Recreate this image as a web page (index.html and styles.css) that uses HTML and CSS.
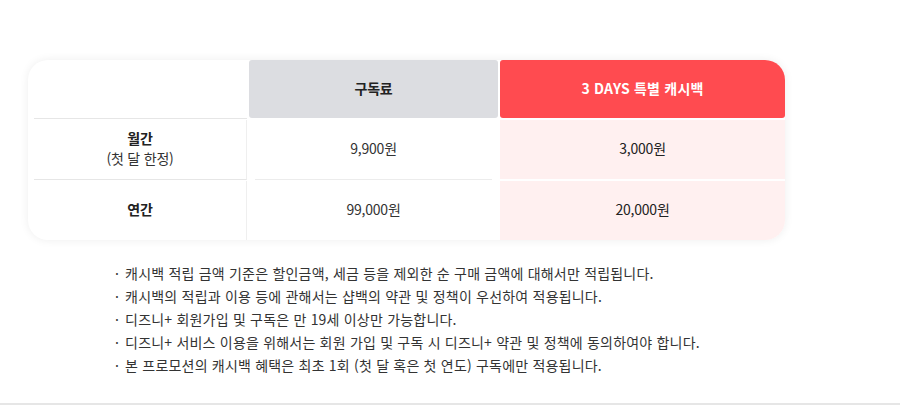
FILE: index.html
```html
<!DOCTYPE html>
<html lang="ko">
<head>
<meta charset="utf-8">
<link rel="stylesheet" href="styles.css">
</head>
<body>
<section class="promo">
  <div class="card">
    <div class="cell label head"></div>
    <div class="cell th gray">구독료</div>
    <div class="cell th red">3 DAYS 특별 캐시백</div>

    <div class="cell label r1"><strong>월간</strong><span>(첫 달 한정)</span></div>
    <div class="cell mid r1">9,900원</div>
    <div class="cell pink">3,000원</div>

    <div class="cell label r2"><strong>연간</strong></div>
    <div class="cell mid r2">99,000원</div>
    <div class="cell pink last">20,000원</div>
  </div>
  <ul class="notes">
    <li>캐시백 적립 금액 기준은 할인금액, 세금 등을 제외한 순 구매 금액에 대해서만 적립됩니다.</li>
    <li>캐시백의 적립과 이용 등에 관해서는 샵백의 약관 및 정책이 우선하여 적용됩니다.</li>
    <li>디즈니+ 회원가입 및 구독은 만 19세 이상만 가능합니다.</li>
    <li>디즈니+ 서비스 이용을 위해서는 회원 가입 및 구독 시 디즈니+ 약관 및 정책에 동의하여야 합니다.</li>
    <li>본 프로모션의 캐시백 혜택은 최초 1회 (첫 달 혹은 첫 연도) 구독에만 적용됩니다.</li>
  </ul>
</section>
<footer class="foot"></footer>
</body>
</html>
```

FILE: styles.css
```css
* { box-sizing: border-box; }
html, body { margin: 0; padding: 0; background: #fff; }
body {
  font-family: "Noto Sans CJK KR", "Noto Sans", sans-serif;
  color: #333;
  width: 900px;
  height: 409px;
  overflow: hidden;
}
.promo {
  height: 403px;
  padding-top: 60px;
  padding-left: 28px;
}
.card {
  width: 757px;
  height: 180px;
  display: grid;
  grid-template-columns: 219px 249px 285px;
  grid-template-rows: 58px 59px 59px;
  column-gap: 2px;
  row-gap: 2px;
  background: #fff;
  border-radius: 20px;
  box-shadow: 0 0 10px rgba(0, 0, 0, 0.07);
}
.cell {
  display: flex;
  flex-direction: column;
  align-items: center;
  justify-content: center;
  padding-bottom: 4px;
  font-size: 14px;
  line-height: 20px;
  color: #333;
  letter-spacing: -0.2px;
}
.label {
  margin-left: 6px;
  border-right: 1px solid #efefef;
  padding-bottom: 3px;
}
.label.head { border-right: none; border-bottom: 1px solid #e6e6e6; margin-bottom: -1px; }
.label.r1 { border-bottom: 1px solid #e6e6e6; margin-bottom: -1px; }
.label strong { font-weight: 700; color: #222; }
.label span { font-weight: 400; }
.th { font-weight: 700; padding-bottom: 2px; }
.gray {
  background: #dcdde1;
  color: #222;
  border-radius: 3px;
}
.red {
  background: #ff4b50;
  color: #fff;
  border-radius: 3px 20px 3px 3px;
  letter-spacing: 0.2px;
}
.mid.r1 {
  border-bottom: 1px solid #ececec;
  margin: 0 6px -1px 6px;
}
.pink {
  background: #fff0f0;
  color: #222;
}
.pink.last { border-radius: 0 0 20px 0; }
.notes {
  list-style: none;
  margin: 22px 0 0 0;
  padding: 0 0 0 87px;
  font-size: 14px;
  line-height: 23px;
  color: #333;
  letter-spacing: 0.2px;
}
.notes li::before {
  content: "·";
  margin-right: 6px;
}
.foot {
  height: 6px;
  border-top: 2px solid #e6e6e6;
}
```
